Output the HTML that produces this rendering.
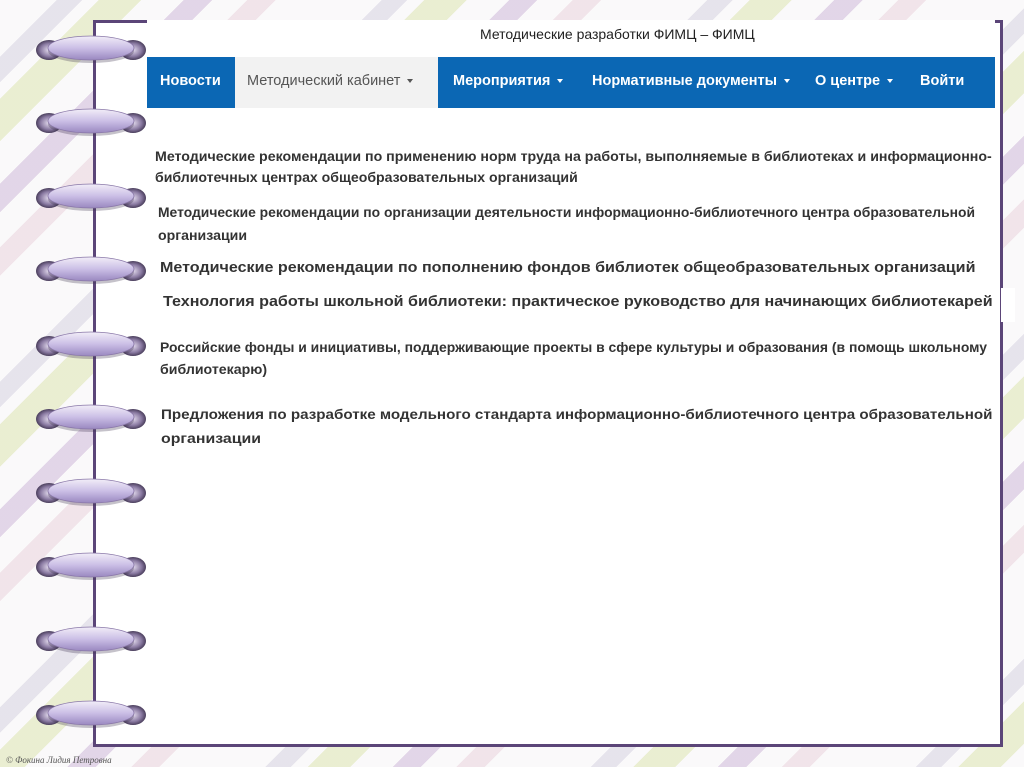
<!DOCTYPE html>
<html><head><meta charset="utf-8">
<style>
html,body{margin:0;padding:0;}
body{width:1024px;height:767px;position:relative;overflow:hidden;font-family:"Liberation Sans","DejaVu Sans",sans-serif;
background:
repeating-linear-gradient(135deg, rgba(255,255,255,0) 0 40px, rgba(200,195,215,.4) 40px 58px, rgba(255,255,255,0) 58px 70px, rgba(215,225,160,.45) 70px 100px, rgba(255,255,255,0) 100px 130px, rgba(190,160,205,.4) 130px 150px, rgba(255,255,255,0) 150px 175px, rgba(225,190,205,.35) 175px 195px, rgba(255,255,255,0) 195px 230px),
#faf9fa;}
.sheet{position:absolute;left:93px;top:20px;width:910px;height:727px;background:#fff;}
.fl{position:absolute;background:#5b4578;}
.title{position:absolute;top:26px;left:480px;font-size:14px;color:#222;white-space:nowrap;}
.nav{position:absolute;left:147px;top:57px;width:848px;height:51px;background:#0b67b4;}
.nav span{position:absolute;top:16px;color:#fff;font-weight:bold;font-size:14.5px;white-space:nowrap;}
.nav .act{position:absolute;left:88px;top:0;width:203px;height:51px;background:#f2f2f2;}
.nav .act span{color:#555;font-weight:normal;left:12px;}
.car{display:inline-block;border-left:3px solid transparent;border-right:3px solid transparent;border-top:4px solid currentColor;vertical-align:middle;margin-left:7px;}
.l{position:absolute;white-space:nowrap;color:#333;font-weight:bold;font-size:13.5px;transform-origin:0 50%;}
.big{font-size:15px;}
.ring{position:absolute;left:34px;width:114px;height:30px;}
.cr{position:absolute;left:6px;top:755px;font-family:"Liberation Serif",serif;font-style:italic;font-size:9px;color:#555;}
</style></head><body>
<div class="sheet"></div>
<div class="fl" style="left:93px;top:20px;width:3px;height:727px"></div>
<div class="fl" style="left:93px;top:20px;width:54px;height:3px"></div>
<div class="fl" style="left:1000px;top:21px;width:3px;height:726px"></div>
<div class="fl" style="left:93px;top:744px;width:910px;height:3px"></div>
<div class="fl" style="left:995px;top:20px;width:8px;height:3px"></div>
<div class="title">Методические разработки ФИМЦ – ФИМЦ</div>
<div class="nav">
<span style="left:13px">Новости</span>
<div class="act"><span>Методический кабинет<i class="car"></i></span></div>
<span style="left:306px">Мероприятия<i class="car"></i></span>
<span style="left:445px">Нормативные документы<i class="car"></i></span>
<span style="left:668px">О центре<i class="car"></i></span>
<span style="left:773px">Войти</span>
</div>
<div style="position:absolute;left:1001px;top:288px;width:14px;height:34px;background:#fff"></div>
<div class="l" style="left:155px;top:149px" w="837">Методические рекомендации по применению норм труда на работы, выполняемые в библиотеках и информационно-</div>
<div class="l" style="left:155px;top:170px" w="423">библиотечных центрах общеобразовательных организаций</div>
<div class="l" style="left:158px;top:205px" w="817">Методические рекомендации по организации деятельности информационно-библиотечного центра образовательной</div>
<div class="l" style="left:158px;top:228px" w="89">организации</div>
<div class="l big" style="left:160px;top:259px" w="816">Методические рекомендации по пополнению фондов библиотек общеобразовательных организаций</div>
<div class="l big" style="left:163px;top:293px" w="830">Технология работы школьной библиотеки: практическое руководство для начинающих библиотекарей</div>
<div class="l" style="left:160px;top:340px" w="827">Российские фонды и инициативы, поддерживающие проекты в сфере культуры и образования (в помощь школьному</div>
<div class="l" style="left:160px;top:362px" w="107">библиотекарю)</div>
<div class="l" style="left:161px;top:407px" w="831">Предложения по разработке модельного стандарта информационно-библиотечного центра образовательной</div>
<div class="l" style="left:161px;top:431px" w="100">организации</div>
<svg width="0" height="0" style="position:absolute"><defs>
<linearGradient id="g" x1="0" y1="0" x2="0" y2="1"><stop offset="0" stop-color="#f2eef8"/><stop offset=".5" stop-color="#cbbfe6"/><stop offset="1" stop-color="#9a88c0"/></linearGradient>
<radialGradient id="k"><stop offset="0" stop-color="#e4dcee"/><stop offset=".65" stop-color="#8a7aa2"/><stop offset="1" stop-color="#4a3e5c"/></radialGradient>
</defs></svg>
<div id="rings"></div>
<div class="cr">© Фокина Лидия Петровна</div>
<script>
var ys=[49,122,197,270,345,418,492,566,640,714],h='';
ys.forEach(function(y){h+='<svg class="ring" style="top:'+(y-15)+'px" viewBox="0 0 114 30"><ellipse cx="15" cy="16" rx="13" ry="10" fill="url(#k)"/><ellipse cx="99" cy="16" rx="13" ry="10" fill="url(#k)"/><ellipse cx="57" cy="17" rx="43" ry="12" fill="#3f3450" opacity=".3"/><ellipse cx="57" cy="14" rx="43" ry="12" fill="url(#g)" stroke="#8a78a8" stroke-width=".8"/></svg>';});
document.getElementById('rings').innerHTML=h;
document.querySelectorAll('.l').forEach(function(e){var w=+e.getAttribute('w');var s=e.scrollWidth;if(s)e.style.transform='scaleX('+(w/s)+')';});
</script>
</body></html>
